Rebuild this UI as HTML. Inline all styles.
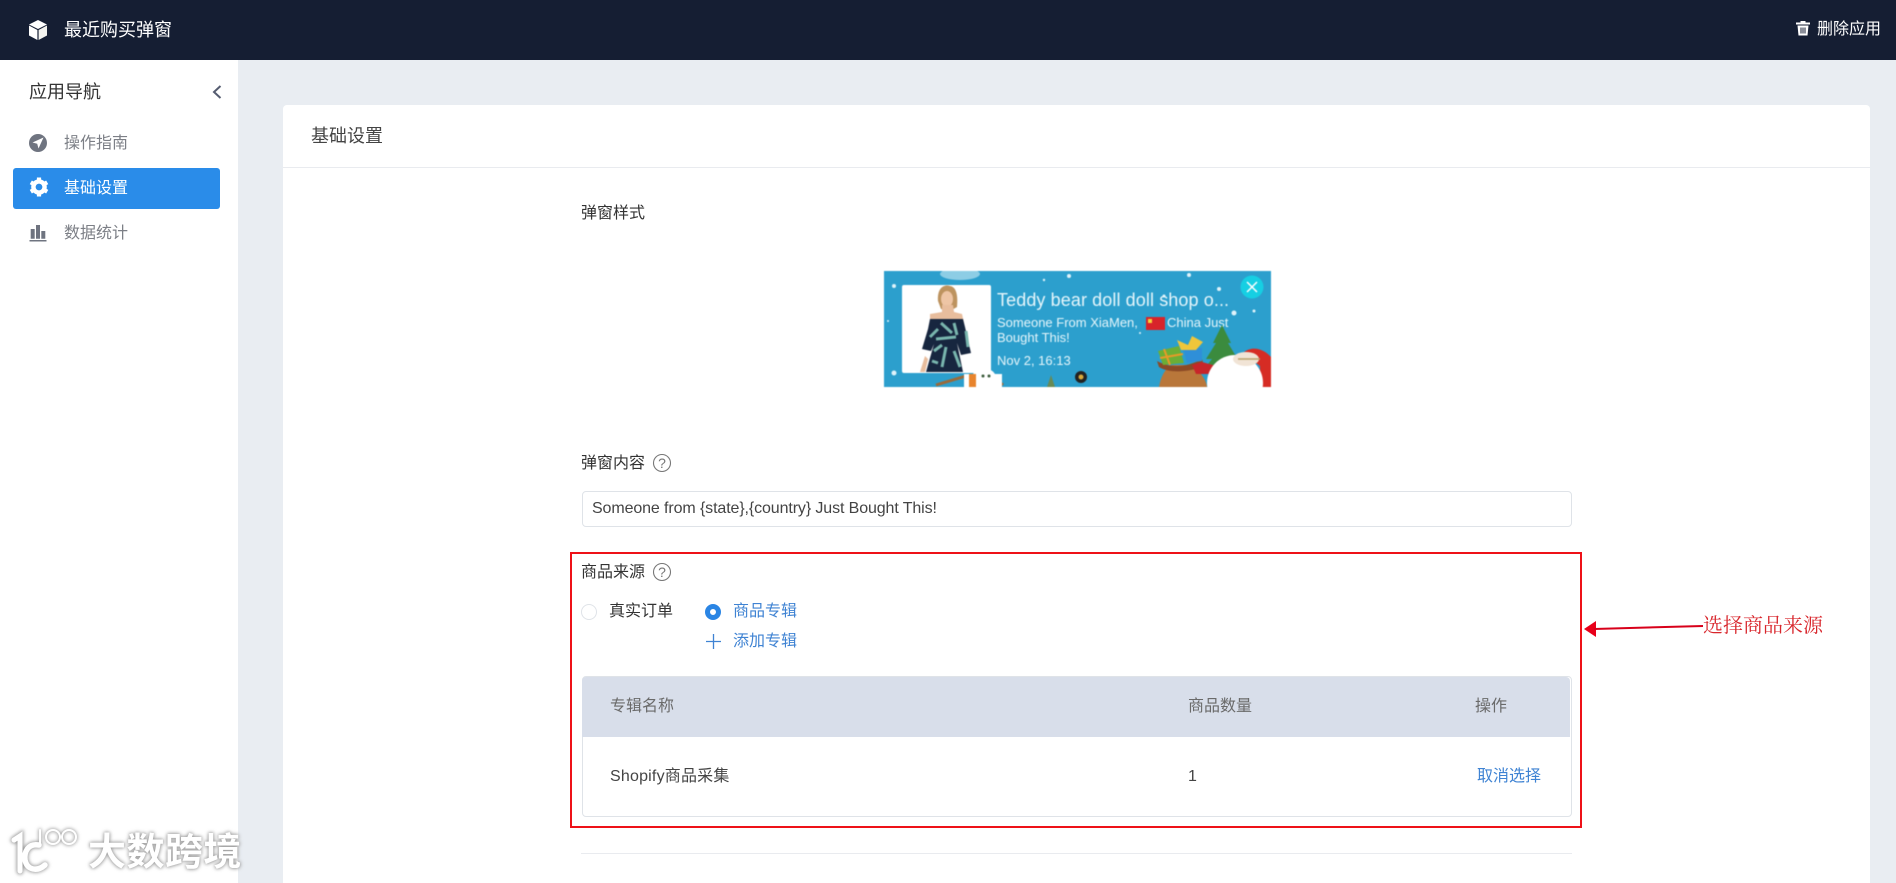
<!DOCTYPE html>
<html lang="zh"><head><meta charset="utf-8"><title>最近购买弹窗</title>
<style>
*{box-sizing:border-box}
html,body{margin:0;padding:0}
body{width:1896px;height:883px;overflow:hidden;position:relative;background:#e9edf2;font-family:"Liberation Sans","Noto Sans CJK SC",sans-serif;font-size:16px;color:#333}
.a{position:absolute;white-space:nowrap;line-height:24px}
.blue{color:#3f83d3}
.gray{color:#7c7f86}
</style></head><body>
<div class="a" style="left:0;top:0;width:1896px;height:60px;background:#151e33"></div>
<svg class="a" style="left:28px;top:19px" width="20" height="22" viewBox="0 0 20 22"><path d="M10 1L19 5.500L10 10L1 5.500Z" fill="#fff"/><path d="M1 6.500L9.400 11V21L1 16.500Z" fill="#fff"/><path d="M19 6.500L10.600 11V21L19 16.500Z" fill="#f3f3ef"/></svg>
<div class="a" style="left:64px;top:18px;font-size:18px;color:#fff">最近购买弹窗</div>
<svg class="a" style="left:1795px;top:20px" width="16" height="16" viewBox="0 0 16 16"><path d="M1 2.500H5.500V1H10.500V2.500H15V4.500H1Z" fill="#fff"/><path d="M2.500 5.500H13.500L12.500 15.500H3.500Z" fill="#fff"/><path d="M6 7.500V13.500M8 7.500V13.500M10 7.500V13.500" stroke="#151e33" stroke-width="1"/></svg>
<div class="a" style="left:1817px;top:18px;font-size:16px;color:#fff">删除应用</div>

<div class="a" style="left:0;top:60px;width:238px;height:823px;background:#fff"></div>
<div class="a" style="left:29px;top:80px;font-size:18px;color:#333">应用导航</div>
<svg class="a" style="left:211px;top:84px" width="12" height="16" viewBox="0 0 12 16"><path d="M9.500 2L3 8L9.500 14" fill="none" stroke="#555c70" stroke-width="2"/></svg>
<svg class="a" style="left:29px;top:134px" width="18" height="18" viewBox="0 0 18 18"><circle cx="9" cy="9" r="9" fill="#6f7480"/><path d="M14.500 3.500L3.500 8.500L8.200 9.800L9.500 14.500Z" fill="#fff"/></svg>
<div class="a gray" style="left:64px;top:132px">操作指南</div>
<div class="a" style="left:13px;top:168px;width:207px;height:41px;background:#2a8ce9;border-radius:3px"></div>
<svg class="a" style="left:29px;top:177px" width="20" height="20" viewBox="0 0 20 20"><circle cx="10" cy="10" r="5.500" fill="none" stroke="#fff" stroke-width="4.600"/><path d="M10 .5V4.500M10 15.500V19.500M1.800 5.300L5.200 7.300M14.800 12.700L18.200 14.700M1.800 14.700L5.200 12.700M14.800 7.300L18.200 5.300" stroke="#fff" stroke-width="4.200"/><circle cx="10" cy="10" r="3.300" fill="#2a8ce9"/></svg>
<div class="a" style="left:64px;top:177px;color:#fff">基础设置</div>
<svg class="a" style="left:29px;top:223px" width="18" height="20" viewBox="0 0 18 20"><path d="M1.700 6H5.700V15.700H1.700ZM7 2H11V15.700H7ZM12.300 8H16.300V15.700H12.300Z" fill="#6f7480"/><rect x="0.500" y="17" width="17" height="1.500" fill="#6f7480"/></svg>
<div class="a gray" style="left:64px;top:222px">数据统计</div>

<div class="a" style="left:283px;top:105px;width:1587px;height:778px;background:#fff;border-radius:4px 4px 0 0"></div>
<div class="a" style="left:283px;top:167px;width:1587px;height:1px;background:#e9ebef"></div>
<div class="a" style="left:311px;top:124px;font-size:18px;color:#444">基础设置</div>
<div class="a" style="left:581px;top:202px">弹窗样式</div>

<svg class="a" style="left:884px;top:271px;filter:blur(.45px)" width="387" height="116" viewBox="0 0 387 116">
<rect width="387" height="116" fill="#2c9fcd"/>
<g fill="#dff3fa"><ellipse cx="76" cy="3" rx="20" ry="6" opacity=".55"/><circle cx="10" cy="15" r="2"/><circle cx="185" cy="5" r="2"/><circle cx="305" cy="4" r="2"/><circle cx="335" cy="18" r="2"/><circle cx="350" cy="42" r="2.500"/><circle cx="10" cy="102" r="2.500"/><circle cx="160" cy="9" r="1.200"/><circle cx="280" cy="25" r="1.500"/><circle cx="370" cy="40" r="1.500"/><circle cx="256" cy="62" r="1"/><circle cx="4" cy="50" r="1"/></g>
<rect x="18" y="14" width="89" height="88" rx="2" fill="#fff"/>
<path d="M54 30C53 17 60 13 66 15C73 16 74 26 73 36L66 40L57 38Z" fill="#bd935f"/>
<ellipse cx="63" cy="28" rx="6" ry="8" fill="#eec5a5"/>
<path d="M58 34H69L70 41L78 43L80 52L46 52L46 43L58 41Z" fill="#e8bd9d"/>
<path d="M46 48L79 48L81 56L87 82L77 84L73 72L79 101H42L50 73L47 80L38 78L44 58Z" fill="#17263f"/>
<path d="M57 52L68 62M70 52L73 64M46 66L54 58M52 68L72 66M50 80L58 74M62 76L58 96M70 80L76 96M82 60L84 76M48 90L54 92" stroke="#79b6ae" stroke-width="3" fill="none"/>
<path d="M36 101L41 85L44 88L41 101Z" fill="#e8bd9d"/>
<path d="M52 114L82 105M119 114L105 103" stroke="#9a6a3a" stroke-width="3"/>
<circle cx="100" cy="110" r="13" fill="#fff"/>
<rect x="80" y="103" width="38" height="13" fill="#fff"/>
<rect x="85" y="103" width="7" height="13" fill="#e8842c"/>
<circle cx="99" cy="105" r="1.500" fill="#3a5a3a"/><circle cx="105" cy="105" r="1.500" fill="#3a5a3a"/>
<text x="113" y="35" font-family="Liberation Sans" font-size="18" fill="#e6f6fb" letter-spacing=".1">Teddy bear doll doll shop o...</text>
<text x="113" y="56" font-family="Liberation Sans" font-size="13" fill="#e6f6fb">Someone From XiaMen,</text>
<rect x="262" y="46" width="19" height="13" fill="#d8232a"/><rect x="264" y="48" width="4" height="4" fill="#f7d33a"/>
<text x="283" y="56" font-family="Liberation Sans" font-size="13" fill="#e6f6fb">China Just</text>
<text x="113" y="71" font-family="Liberation Sans" font-size="13" fill="#e6f6fb">Bought This!</text>
<text x="113" y="94" font-family="Liberation Sans" font-size="13" fill="#e6f6fb">Nov 2, 16:13</text>
<circle cx="368" cy="16" r="11.500" fill="#16cfe3"/><path d="M363 11L373 21M373 11L363 21" stroke="#fff" stroke-width="1.500"/>
<circle cx="197" cy="106" r="6" fill="#222"/><circle cx="197" cy="106" r="2.500" fill="#d7a83a"/>
<path d="M163 116L167 104L171 116Z" fill="#678a55"/>
<path d="M275 116C277 104 282 97 288 94L306 94C316 100 322 108 323 116Z" fill="#b9773a"/>
<path d="M273 90C284 96 300 98 318 88L320 95C304 102 284 102 275 96Z" fill="#8c4a26"/>
<path d="M274 80L295 75L300 92L279 94Z" fill="#6cae35"/><path d="M280 78L286 94M276 87L299 83" stroke="#e89a28" stroke-width="2"/>
<path d="M299 77H318L318 90L303 92Z" fill="#2f8fd8"/>
<path d="M293 69L304 74L308 65L319 71L312 79H297Z" fill="#f0c63a"/>
<path d="M338 54L347 72L344 72L356 92L348 92L352 98H320L328 88H322L332 72H329Z" fill="#3b8b3e"/>
<path d="M308 94L318 91L336 96L330 103H312Z" fill="#c7252a"/>
<path d="M359 82C368 74 380 78 387 86V116H376V95Z" fill="#d62c24"/>
<circle cx="351" cy="112" r="28" fill="#fff"/>
<ellipse cx="362" cy="88" rx="13" ry="7" fill="#f1e4d6"/>
<path d="M354 88H376" stroke="#b9a06a" stroke-width="1.500"/>
</svg>

<div class="a" style="left:581px;top:452px">弹窗内容</div>
<svg class="a" style="left:652px;top:453px" width="20" height="20" viewBox="0 0 20 20"><circle cx="10" cy="10" r="8.500" fill="none" stroke="#777" stroke-width="1.100"/><text x="10" y="15" text-anchor="middle" font-family="Liberation Sans" font-size="14" fill="#777">?</text></svg>
<div class="a" style="left:582px;top:491px;width:990px;height:36px;border:1px solid #dfe3e8;border-radius:4px"></div>
<div class="a" style="left:592px;top:497px;color:#444;letter-spacing:-.11px">Someone from {state},{country} Just Bought This!</div>

<div class="a" style="left:570px;top:552px;width:1012px;height:276px;border:2px solid #ee1118"></div>
<div class="a" style="left:581px;top:561px">商品来源</div>
<svg class="a" style="left:652px;top:562px" width="20" height="20" viewBox="0 0 20 20"><circle cx="10" cy="10" r="8.500" fill="none" stroke="#777" stroke-width="1.100"/><text x="10" y="15" text-anchor="middle" font-family="Liberation Sans" font-size="14" fill="#777">?</text></svg>
<div class="a" style="left:581px;top:604px;width:16px;height:16px;border:1px solid #dfe3e8;border-radius:50%"></div>
<div class="a" style="left:609px;top:600px">真实订单</div>
<div class="a" style="left:705px;top:604px;width:16px;height:16px;border:5px solid #2a85e4;border-radius:50%;background:#fff"></div>
<div class="a blue" style="left:733px;top:600px">商品专辑</div>
<svg class="a" style="left:706px;top:634px" width="15" height="15" viewBox="0 0 15 15"><path d="M7.500 0V15M0 7.500H15" stroke="#3f83d3" stroke-width="1.300"/></svg>
<div class="a blue" style="left:733px;top:630px">添加专辑</div>

<div class="a" style="left:582px;top:676px;width:990px;height:141px;border:1px solid #dfe3e8;border-radius:4px"></div>
<div class="a" style="left:582px;top:677px;width:988px;height:60px;background:#d8deea;border-radius:4px 4px 0 0"></div>
<div class="a" style="left:610px;top:695px;color:#6a6a6a">专辑名称</div>
<div class="a" style="left:1188px;top:695px;color:#6a6a6a">商品数量</div>
<div class="a" style="left:1475px;top:695px;color:#6a6a6a">操作</div>
<div class="a" style="left:610px;top:765px;color:#444;letter-spacing:.2px">Shopify商品采集</div>
<div class="a" style="left:1188px;top:765px;color:#444">1</div>
<div class="a blue" style="left:1477px;top:765px">取消选择</div>
<div class="a" style="left:581px;top:853px;width:991px;height:1px;background:#e9ebef"></div>

<svg class="a" style="left:1580px;top:615px" width="126" height="24" viewBox="0 0 126 24"><path d="M4 14L16 6V22Z" fill="#e8001a"/><path d="M14 14L123 11" stroke="#d8001a" stroke-width="2"/></svg>
<div class="a" style="left:1703px;top:614px;font-family:'Liberation Serif','Noto Serif CJK SC',serif;font-size:20px;color:#d8262c">选择商品来源</div>

<svg class="a" style="left:0;top:815px" width="100" height="68" viewBox="0 815 100 68">
<defs><filter id="b" x="-20%" y="-20%" width="140%" height="140%"><feGaussianBlur stdDeviation="1.800"/></filter></defs>
<g fill="none" stroke="#9a9a9a" filter="url(#b)" stroke-linecap="round"><path d="M14 840L20 836V871" stroke-width="7"/><path d="M39 845C28 843 24 852 25 860C27 870 37 872 45 865" stroke-width="7"/><path d="M40 830V845" stroke-width="3"/><circle cx="53" cy="837" r="7" stroke-width="3"/><circle cx="69" cy="837" r="7" stroke-width="3"/></g>
<g fill="none" stroke="#fff" stroke-linecap="round"><path d="M14 840L20 836V871" stroke-width="5"/><path d="M39 845C28 843 24 852 25 860C27 870 37 872 45 865" stroke-width="5.500"/><path d="M40 830V845" stroke-width="2"/><circle cx="53" cy="837" r="7" stroke-width="2"/><circle cx="69" cy="837" r="7" stroke-width="2"/></g>
</svg>
<div class="a" style="left:88px;top:833px;font-size:38px;line-height:40px;font-weight:700;letter-spacing:.5px;color:#fff;text-shadow:0 0 3px #999,0 0 5px #aaa">大数跨境</div>
</body></html>
